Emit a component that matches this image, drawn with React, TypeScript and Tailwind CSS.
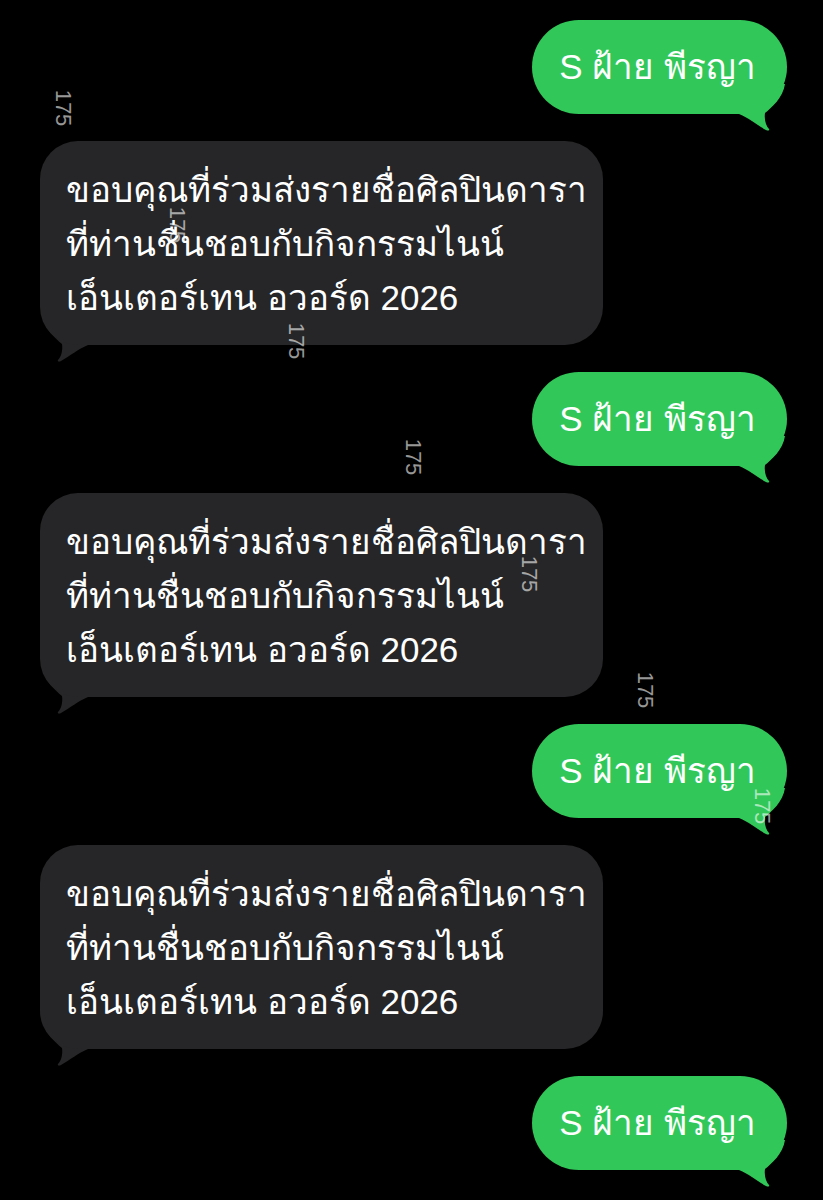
import React from "react";

const GREEN = "bg-[#31c859]";

function Tail({ color, flip }: { color: string; flip?: boolean }) {
  return (
    <svg
      width="50"
      height="48"
      viewBox="0 0 50 48"
      className={
        "absolute bottom-[-18px] " + (flip ? "right-0 -scale-x-100" : "left-0")
      }
    >
      <path
        d="M2 0 C4 14 16 24 22 29 C23 36 21 42 18 45 C17 46.5 19 47 21 46 C30 41 38 34 48 30 L48 0 Z"
        fill={color}
      />
    </svg>
  );
}

function Green() {
  return (
    <div className="relative self-end mr-[36px]">
      <div
        className={`${GREEN} relative z-10 h-[94px] rounded-full flex items-center pl-[27px] pr-[31px] text-white text-[35px] leading-[54px] whitespace-nowrap`}
      >
        S ฝ้าย พีรญา
      </div>
      <Tail color="#31c859" flip />
    </div>
  );
}

function Grey() {
  return (
    <div className="relative ml-[40px] w-[563px]">
      <div className="relative z-10 h-[204px] rounded-[38px] bg-[#262628] pl-[26px] pt-[22px] text-white text-[35px] leading-[54px] whitespace-nowrap">
        ขอบคุณที่ร่วมส่งรายชื่อศิลปินดารา
        <br />
        ที่ท่านชื่นชอบกับกิจกรรมไนน์
        <br />
        เอ็นเตอร์เทน อวอร์ด 2026
      </div>
      <Tail color="#262628" />
    </div>
  );
}

const marks = [
  [63, 108],
  [177, 225],
  [296, 341],
  [413, 457],
  [529, 574],
  [645, 690],
  [762, 806],
];

export default function App() {
  return (
    <div
      className="relative h-[1200px] w-full overflow-hidden bg-black flex flex-col gap-[27px] pt-[20px]"
      style={{ fontFamily: '"Liberation Sans", "Noto Sans", Arial, sans-serif' }}
    >
      <Green />
      <Grey />
      <Green />
      <Grey />
      <Green />
      <Grey />
      <Green />
      {marks.map(([x, y], i) => (
        <div
          key={i}
          className="absolute z-20 -translate-x-1/2 -translate-y-1/2 rotate-90 text-[22px] leading-none text-white/60"
          style={{ left: x, top: y }}
        >
          175
        </div>
      ))}
    </div>
  );
}
